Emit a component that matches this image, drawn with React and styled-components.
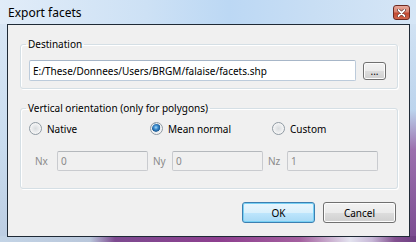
import styled, { createGlobalStyle } from "styled-components";

const GlobalStyle = createGlobalStyle`
  html, body {
    margin: 0;
    padding: 0;
    overflow: hidden;
  }
  body {
    font-family: "Noto Sans", "Open Sans", sans-serif;
    font-size: 10px;
  }
`;

const Window = styled.div`
  width: 416px;
  height: 242px;
  box-sizing: border-box;
  display: flex;
  flex-direction: column;
  background:
    linear-gradient(to right, #c3d4e6 0, #b9c7db 90px, #7d4a90 115px, #8e3f8f 220px, #a4609f 300px, #e3e3ef 350px, #c7b7d7 372px, #82508f 395px, #6e3f83 416px) bottom / 100% 6px no-repeat,
    linear-gradient(to bottom, #d7e6f5 0, #bcd4ed 110px, #9c6fae 150px, #7b4a90 242px) right / 6px 100% no-repeat,
    linear-gradient(to bottom, #dbe8f6 0, #c9dcef 60%, #bccde2 100%);
`;

const TitleBar = styled.div`
  height: 24px;
  display: flex;
  align-items: center;
  justify-content: space-between;
  padding: 0 8px 0 8px;
  background: linear-gradient(to right, #e1ecf8 0, #cde1f5 35%, #bcd8f4 55%, #c8def4 75%, #d6e6f6 100%);
  color: #000;
  font-size: 12px;
`;

const CloseButton = styled.div`
  width: 15px;
  height: 13px;
  margin-top: 1px;
  margin-right: -2px;
  border: 1px solid #6d2a22;
  border-radius: 3px;
  background: linear-gradient(to bottom, #e7a99c 0, #d8826f 45%, #c24a33 55%, #d0664c 100%);
  display: flex;
  align-items: center;
  justify-content: center;
`;

const Client = styled.div`
  flex: 1;
  margin: 0 6px 5px 7px;
  border: 1px solid #1f2a36;
  background: #f0f0f0;
  padding: 0 11px 0 12px;
  display: flex;
  flex-direction: column;
`;

const Group = styled.fieldset`
  margin: ${(p) => p.$top}px 0 0 0;
  border: 1px solid #d5dfe5;
  border-radius: 3px;
  box-shadow: inset 1px 1px 0 #fff, 1px 1px 0 #fff;
  padding: ${(p) => p.$pad};
  min-width: 0;
`;

const Legend = styled.legend`
  margin-left: -3px;
  padding: 0 2px;
  line-height: 15px;
  color: #000;
`;

const Row = styled.div`
  display: flex;
  align-items: center;
  gap: ${(p) => p.$gap || 0}px;
  padding-left: ${(p) => p.$indent || 0}px;
  margin-top: ${(p) => p.$top || 0}px;
`;

const TextField = styled.div`
  box-sizing: border-box;
  width: ${(p) => p.$w}px;
  height: ${(p) => p.$h}px;
  border: 1px solid ${(p) => (p.disabled ? "#c9cbcf" : "#bccbdb")};
  border-top-color: ${(p) => (p.disabled ? "#b4b8bc" : "#a7b6c8")};
  border-radius: 2px;
  background: ${(p) => (p.disabled ? "#f0f0f0" : "#fff")};
  color: ${(p) => (p.disabled ? "#8a8a8a" : "#000")};
  display: flex;
  align-items: center;
  padding-left: 3px;
  white-space: nowrap;
  overflow: hidden;
`;

const PushButton = styled.div`
  box-sizing: border-box;
  width: ${(p) => p.$w}px;
  height: ${(p) => p.$h}px;
  border: 1px solid ${(p) => (p.$default ? "#3c7fb1" : "#707070")};
  border-radius: 3px;
  background: ${(p) =>
    p.$default
      ? "linear-gradient(to bottom, #eaf6fd 0, #d9f0fc 50%, #bee6fd 51%, #a7d9f5 100%)"
      : "linear-gradient(to bottom, #f2f2f2 0, #ebebeb 50%, #dddddd 51%, #cfcfcf 100%)"};
  box-shadow: inset 0 0 0 1px ${(p) => (p.$default ? "#78d0f4" : "#fcfcfc")};
  display: flex;
  align-items: center;
  justify-content: center;
  color: #000;
`;

const Radios = styled.div`
  display: grid;
  grid-template-columns: 121px 122px 1fr;
  height: 15px;
  align-items: center;
`;

const RadioItem = styled.label`
  display: flex;
  align-items: center;
  gap: 5px;
  color: #000;
`;

const RadioCircle = styled.span`
  box-sizing: border-box;
  width: 13px;
  height: 13px;
  border-radius: 50%;
  border: 1px solid #8f9aa3;
  background: ${(p) =>
    p.$checked
      ? "radial-gradient(circle at 45% 40%, #a9dcf8 0, #3f8ed0 2px, #1a5b95 4px, #e6eaee 4.6px, #f4f4f4 100%)"
      : "radial-gradient(circle at 50% 50%, #d9dcde 0, #e8eaec 3px, #f7f7f7 6px)"};
  box-shadow: inset 0 0 0 1px #f4f4f4;
`;

const FieldLabel = styled.span`
  width: ${(p) => p.$w}px;
  color: #8a8a8a;
`;

const Pair = styled.div`
  display: flex;
  align-items: center;
`;

const Footer = styled.div`
  display: flex;
  justify-content: flex-end;
  gap: 8px;
  margin-top: 13px;
  padding-right: 2px;
`;

function Radio({ label, checked }) {
  return (
    <RadioItem>
      <RadioCircle $checked={checked} />
      {label}
    </RadioItem>
  );
}

export default function App() {
  return (
    <>
      <GlobalStyle />
      <Window>
        <TitleBar>
          <span>Export facets</span>
          <CloseButton>
            <svg width="9" height="8" viewBox="0 0 9 8">
              <path d="M1.5 1 L7.5 7 M7.5 1 L1.5 7" stroke="#4a1a14" strokeWidth="3" strokeLinecap="round" />
              <path d="M1.5 1 L7.5 7 M7.5 1 L1.5 7" stroke="#fff" strokeWidth="1.8" strokeLinecap="round" />
            </svg>
          </CloseButton>
        </TitleBar>
        <Client>
          <Group $top={12} $pad="8px 11px 7px 8px">
            <Legend>Destination</Legend>
            <Row $gap={7}>
              <TextField $w={327} $h={21}>
                E:/These/Donnees/Users/BRGM/falaise/facets.shp
              </TextField>
              <PushButton $w={23} $h={18}>...</PushButton>
            </Row>
          </Group>
          <Group $top={12} $pad="5px 11px 17px 8px">
            <Legend>Vertical orientation (only for polygons)</Legend>
            <Radios>
              <Radio label="Native" />
              <Radio label="Mean normal" checked />
              <Radio label="Custom" />
            </Radios>
            <Row $gap={5} $indent={6} $top={15}>
              <Pair>
                <FieldLabel $w={22}>Nx</FieldLabel>
                <TextField disabled $w={91} $h={20}>0</TextField>
              </Pair>
              <Pair>
                <FieldLabel $w={19}>Ny</FieldLabel>
                <TextField disabled $w={91} $h={20}>0</TextField>
              </Pair>
              <Pair>
                <FieldLabel $w={19}>Nz</FieldLabel>
                <TextField disabled $w={91} $h={20}>1</TextField>
              </Pair>
            </Row>
          </Group>
          <Footer>
            <PushButton $default $w={73} $h={21}>OK</PushButton>
            <PushButton $w={73} $h={21}>Cancel</PushButton>
          </Footer>
        </Client>
      </Window>
    </>
  );
}
